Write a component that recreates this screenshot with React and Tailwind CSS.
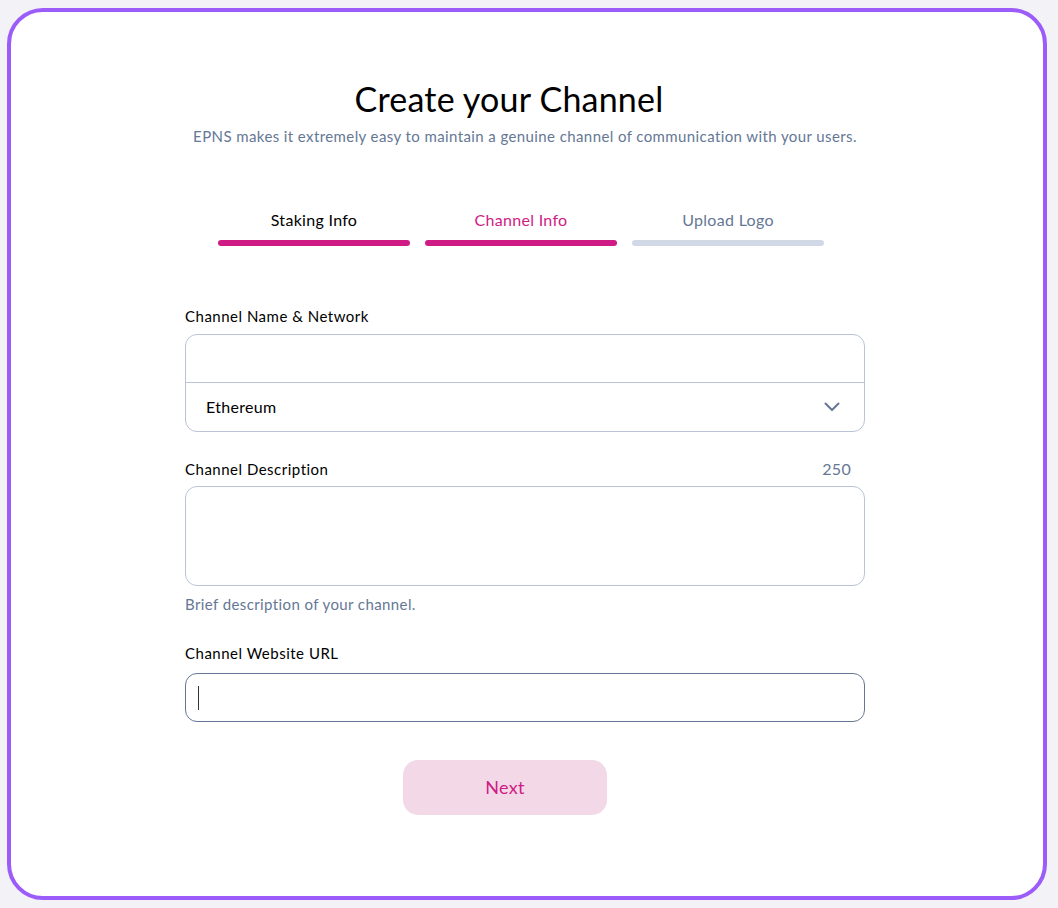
import React from "react";

const font = { fontFamily: "Lato, 'Noto Sans', sans-serif" };

function Tab({ label, active, done }) {
    return (
        <div className="w-[192px] flex flex-col items-center">
            <span
                className={
                    "text-[16px] leading-[20px] tracking-[0.3px] " +
                    (done ? "text-black" : active ? "text-[#cf1c84]" : "text-[#657795]")
                }
            >
                {label}
            </span>
            <div
                className={
                    "mt-[10px] h-[6px] w-full rounded-full " +
                    (done || active ? "bg-[#cf1c84]" : "bg-[#d0d9e5]")
                }
            />
        </div>
    );
}

export default function App() {
    return (
        <div className="w-full h-[908px] bg-[#f3f3f7] pl-[7px] pr-[11px] pt-[8px] pb-[8px]" style={font}>
            <div className="h-full rounded-[36px] border-4 border-[#9b5cfa] bg-white flex flex-col items-center pt-[67px]">
                <h1 className="mr-[36px] text-[34px] leading-[40px] text-black tracking-[0.2px]">Create your Channel</h1>
                <p className="mr-[4px] mt-[8px] text-[15px] leading-[18px] text-[#657795] tracking-[0.4px]">
                    EPNS makes it extremely easy to maintain a genuine channel of communication with your users.
                </p>

                <div className="mr-[12px] mt-[65px] flex gap-[15px]">
                    <Tab label="Staking Info" done />
                    <Tab label="Channel Info" active />
                    <Tab label="Upload Logo" />
                </div>

                <div className="mr-[4px] mt-[61px] w-[680px] flex flex-col">
                    <label className="text-[15px] leading-[18px] tracking-[0.5px] text-black">Channel Name &amp; Network</label>
                    <div className="mt-[9px] rounded-[12px] border border-[#bac4d6] flex flex-col">
                        <div className="h-[48px] border-b border-[#bac4d6]" />
                        <div className="h-[48px] flex items-center justify-between pl-[20px] pr-[24px]">
                            <span className="text-[16px] tracking-[0.3px] text-black">Ethereum</span>
                            <svg width="16" height="10" viewBox="0 0 16 10" fill="none">
                                <path d="M1.5 1.5 L8 8 L14.5 1.5" stroke="#657795" strokeWidth="2" strokeLinecap="round" strokeLinejoin="round" />
                            </svg>
                        </div>
                    </div>

                    <div className="mt-[28px] flex justify-between items-end pr-[14px]">
                        <label className="text-[15px] leading-[18px] tracking-[0.5px] text-black">Channel Description</label>
                        <span className="text-[16px] leading-[18px] tracking-[0.3px] text-[#657795]">250</span>
                    </div>
                    <div className="mt-[8px] h-[100px] rounded-[12px] border border-[#bac4d6]" />
                    <p className="mt-[9px] text-[15px] leading-[18px] tracking-[0.4px] text-[#657795]">Brief description of your channel.</p>

                    <label className="mt-[31px] text-[15px] leading-[18px] tracking-[0.5px] text-black">Channel Website URL</label>
                    <div className="mt-[11px] h-[49px] rounded-[12px] border border-[#657795] flex items-center pl-[12px]">
                        <div className="w-px h-[24px] bg-[#333]" />
                    </div>
                </div>

                <button className="mr-[44px] mt-[38px] w-[204px] h-[55px] rounded-[15px] bg-[#f3d9e8] text-[#cf1c84] text-[18px] tracking-[0.3px]">
                    Next
                </button>
            </div>
        </div>
    );
}
